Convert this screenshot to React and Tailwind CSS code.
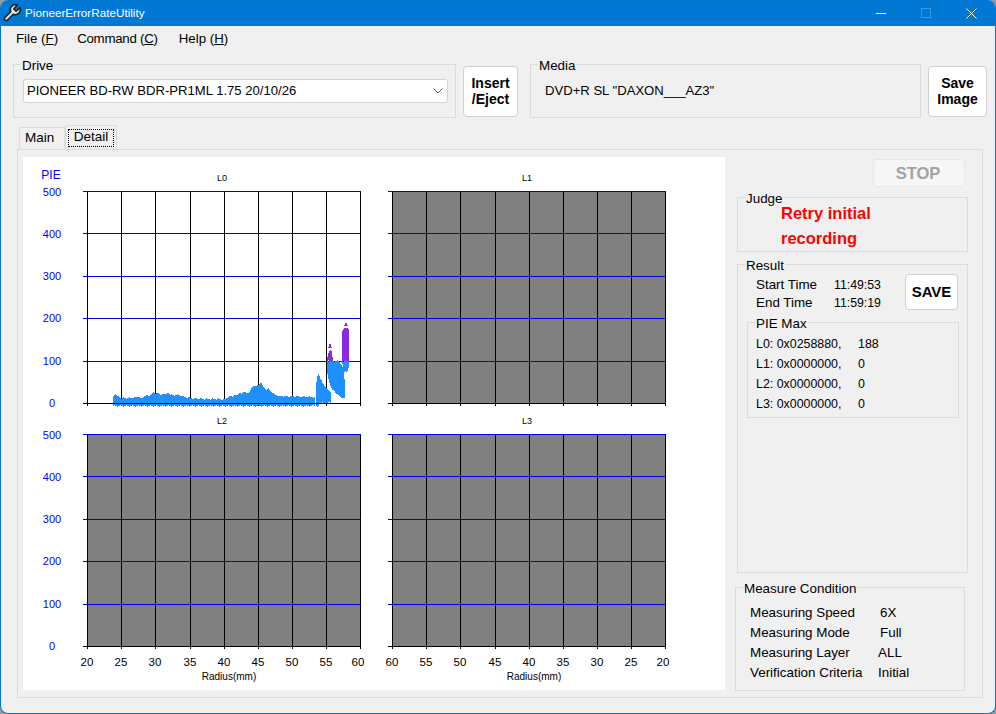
const font = "'Liberation Sans', Arial, sans-serif"

const xs = [0, 34, 68, 103, 137, 171, 205, 239, 273]
const ys = [0, 42, 85, 127, 170, 212]
const yLabels = ["500", "400", "300", "200", "100", "0"]
const yLabelPos = [31, 73, 115, 157, 200, 242]

// outlines of the plotted data, page coordinates
const baseRun = [[113,406],[113,396],[115,394],[117,396],[120,398],[125,398],[131,398],[138,397],[141,398],[144,396],[147,395],[149,397],[151,394],[153,392],[155,394],[157,393],[160,395],[163,394],[166,394],[168,392],[170,395],[173,395],[179,395],[185,397],[191,398],[199,399],[224,399],[228,398],[231,396],[233,397],[236,395],[239,393],[242,394],[245,392],[248,393],[250,391],[252,387],[258,385],[260,384],[261,382],[263,386],[266,390],[268,388],[270,391],[272,393],[276,395],[280,396],[315,397],[315,406]]
const spike = [[316,406],[316,384],[318,374],[320,377],[323,384],[326,388],[329,391],[331,392],[331,403],[319,403],[319,406]]
const blob = [[327,361],[339,361],[341,364],[343,368],[344,372],[345,385],[345,398],[343,398],[340,396],[335,392],[331,387],[329,381],[327,372]]
const tail = [[342,361],[349,361],[349,367],[347,372],[344,372]]
const purpleA = [[327,361],[328,354],[330,350],[332,352],[333,361]]
const purpleB = [[342,361],[342,332],[344,328],[348,328],[349,332],[349,361]]

// break the straight edges up, the plot is a scatter of single readings
function rough(points) {
	const out = []
	let n = 0
	points.forEach(([x, y], i) => {
		const next = points[(i + 1) % points.length]
		const steps = Math.max(1, Math.round(Math.hypot(next[0] - x, next[1] - y) / 2))
		for (let s = 0; s < steps; s++) {
			n++
			const jit = s == 0 ? 0 : ((n * 7) % 3) - 1
			out.push((x + (next[0] - x) * s / steps) + "," + (y + (next[1] - y) * s / steps + jit * 0.8))
		}
	})
	return out.join(" ")
}

function Chart({ title, dark, labels, xAxis, pie, data }) {
	return (
		<svg width="305" height={xAxis ? 282 : 243} className="block overflow-visible" style={{ fontFamily: font }}>
			<text x="199" y="16" fontSize="9" textAnchor="middle" fill="#000">{title}</text>
			{pie && <text x="28" y="14" fontSize="12" textAnchor="middle" fill="#0000ff">PIE</text>}
			{labels && yLabels.map((l, i) => (
				<text key={l} x="29" y={yLabelPos[i]} fontSize="11" textAnchor="middle" fill="#0000ff">{l}</text>
			))}
			<g transform="translate(64,26)" shapeRendering="crispEdges">
				<rect x="0" y="0" width="273" height="212" fill={dark ? "#808080" : "#ffffff"} />
				{xs.map((x) => (
					<line key={x} x1={x + 0.5} x2={x + 0.5} y1="0" y2="215" stroke="#000" />
				))}
				{ys.map((y, i) => (
					<line key={y} x1="-4" x2="274" y1={y + 0.5} y2={y + 0.5} stroke={i == 5 ? "#000" : "#0000e0"} />
				))}
			</g>
			{data && (
				<g transform="translate(-23,-165)" shapeRendering="crispEdges">
					<polygon points={rough(baseRun)} fill="#1e90ff" />
					<polygon points={rough(spike)} fill="#1e90ff" />
					<polygon points={rough(blob)} fill="#1e90ff" />
					<polygon points={rough(tail)} fill="#1e90ff" />
					<polygon points={rough(purpleA)} fill="#8a2be2" />
					<polygon points="328,348 330,343 332,348" fill="#8a2be2" />
					<polygon points={rough(purpleB)} fill="#8a2be2" />
					<polygon points="344,326 346,322 348,326" fill="#8a2be2" />
					<line x1="83" x2="361" y1="403.5" y2="403.5" stroke="#000" />
				</g>
			)}
			{xAxis && xAxis.map((l, i) => (
				<text key={l + i} x={64 + xs[i] - (i == 8 ? 2 : 0)} y="258" fontSize="11.5" textAnchor="middle" fill="#000">{l}</text>
			))}
			{xAxis && <text x="206" y="272" fontSize="10" textAnchor="middle" fill="#000">Radius(mm)</text>}
		</svg>
	)
}

function Group({ label, className, children }) {
	return (
		<div className={"relative border border-[#dcdcdc] " + className}>
			<span className="absolute -top-[7px] left-[7px] bg-[#f0f0f0] px-px text-[13.4px] leading-[16px]">{label}</span>
			{children}
		</div>
	)
}

function Btn({ children, className }) {
	return (
		<button className={"bg-white border border-[#d0d0d0] rounded-[4px] font-bold text-black leading-[16px] " + className}>{children}</button>
	)
}

function Row({ a, b, w, className }) {
	return (
		<div className={"flex " + className}>
			<span style={{ width: w }} className="shrink-0">{a}</span>
			<span>{b}</span>
		</div>
	)
}

export default function App() {
	const up = ["20", "25", "30", "35", "40", "45", "50", "55", "60"]
	const down = ["60", "55", "50", "45", "40", "35", "30", "25", "20"]
	return (
		<div className="w-[996px] h-[714px] bg-[#9a9a9a] overflow-hidden text-[13px] text-black" style={{ fontFamily: font }}>
			<div className="w-full h-full flex flex-col bg-[#f0f0f0] border border-t-0 border-[#0078d4] rounded-t-[8px] rounded-b-[8px] overflow-hidden">
				<div className="h-[26px] shrink-0 bg-[#0078d4] flex items-center text-white text-[11.7px]">
					<svg width="20" height="20" viewBox="0 0 24 24" className="ml-[1px] mr-[3px]" fill="#e4e4e4" stroke="#222" strokeWidth="2" strokeLinejoin="round">
						<path d="M14.7 6.3a1 1 0 0 0 0 1.4l1.6 1.6a1 1 0 0 0 1.4 0l3.77-3.77a6 6 0 0 1-7.94 7.94l-6.91 6.91a2.12 2.12 0 0 1-3-3l6.91-6.91a6 6 0 0 1 7.94-7.94l-3.76 3.76z" />
					</svg>
					<span>PioneerErrorRateUtility</span>
					<div className="ml-auto flex items-center">
						<div className="w-[10px] h-px bg-white mr-[35px]"></div>
						<div className="w-[10px] h-[10px] border border-[#3a97e0] mr-[35px]"></div>
						<svg width="11" height="11" viewBox="0 0 11 11" className="mr-[18px]" stroke="#fff" strokeWidth="1"><path d="M0.5 0.5l10 10M10.5 0.5l-10 10" /></svg>
					</div>
				</div>

				<div className="h-[24px] mt-[1px] shrink-0 flex items-center pl-[15px] text-[13.3px]">
					<span className="mr-[19px]">File (<u>F</u>)</span>
					<span className="mr-[21px] tracking-[-0.02em]">Command (<u>C</u>)</span>
					<span>Help (<u>H</u>)</span>
				</div>

				<div className="flex items-start mt-[13px] pl-[12px] h-[53px] shrink-0">
					<Group label="Drive" className="w-[443px] h-[54px] pl-[9px] pt-[14px]">
						<div className="w-[425px] h-[24px] bg-white border border-[#d4d4d4] rounded-[3px] flex items-center pl-[3px] pr-[4px] text-[13.1px]">
							<span>PIONEER BD-RW BDR-PR1ML 1.75 20/10/26</span>
							<svg width="10" height="6" viewBox="0 0 10 6" className="ml-auto" fill="none" stroke="#555"><path d="M0.5 0.5l4.5 4.5 4.5-4.5" /></svg>
						</div>
					</Group>
					<Btn className="w-[55px] h-[51px] ml-[7px] mt-[2px] pb-[2px] text-[14px]">Insert<br />/Eject</Btn>
					<Group label="Media" className="w-[391px] h-[54px] ml-[12px] pl-[14px] pt-[16px] text-[13.1px]">
						DVD+R SL "DAXON___AZ3"
					</Group>
					<Btn className="w-[59px] h-[51px] ml-[7px] mt-[2px] pb-[2px] text-[14px]">Save<br />Image</Btn>
				</div>

				<div className="flex items-end h-[24px] mt-[8px] ml-[18px] shrink-0 text-[13.5px]">
					<div className="w-[46px] h-[22px] border border-b-0 border-[#dcdcdc] flex items-center pl-[5px]">Main</div>
					<div className="w-[52px] h-[24px] border border-b-0 border-[#dcdcdc] flex items-start justify-center pt-[3px]">
						<span className="w-[46px] h-[18px] border border-dotted border-black text-center leading-[14px]">Detail</span>
					</div>
				</div>

				<div className="w-[966px] h-[549px] ml-[16px] shrink-0 border border-[#dcdcdc] pl-[5px] pt-[7px] flex">
					<div className="w-[702px] h-[533px] bg-white pt-[8px] grid grid-cols-[305px_305px] grid-rows-[243px_282px]">
						<Chart title="L0" labels pie data />
						<Chart title="L1" dark />
						<Chart title="L2" dark labels xAxis={up} />
						<Chart title="L3" dark xAxis={down} />
					</div>

					<div className="w-[250px] pl-[10px] pt-[2px] flex flex-col">
						<div className="h-[28px] w-[92px] ml-[138px] bg-[#f6f6f6] border border-[#e6e6e6] rounded-[4px] flex items-center justify-center pr-[2px] font-bold text-[16.5px] text-[#a3a3a3]">STOP</div>

						<Group label="Judge" className="w-[231px] h-[55px] ml-[2px] mt-[10px] shrink-0">
							<div className="pl-[43px] pt-[3px] font-bold text-[16.5px] leading-[25px] text-[#ff0000]">Retry initial<br />recording</div>
						</Group>

						<Group label="Result" className="w-[231px] h-[309px] ml-[2px] mt-[12px] shrink-0">
							<div className="flex">
								<div className="pl-[18px] pt-[11px] leading-[17px] w-[167px] text-[13.4px]">
									<Row a="Start Time" b={<span className="text-[12.3px]">11:49:53</span>} w="78px" />
									<Row a="End Time" b={<span className="text-[12.3px]">11:59:19</span>} w="78px" />
								</div>
								<Btn className="w-[53px] h-[36px] mt-[9px] text-[15px]">SAVE</Btn>
							</div>
							<Group label="PIE Max" className="w-[212px] h-[96px] ml-[9px] mt-[10px] pt-[11px] pl-[8px] leading-[20px] text-[12.4px]">
								<Row a="L0: 0x0258880," b="188" w="102px" />
								<Row a="L1: 0x0000000," b="0" w="102px" />
								<Row a="L2: 0x0000000," b="0" w="102px" />
								<Row a="L3: 0x0000000," b="0" w="102px" />
							</Group>
						</Group>

						<Group label="Measure Condition" className="w-[230px] h-[104px] mt-[14px] shrink-0 pl-[14px] pt-[15px] leading-[20px] text-[13.4px]">
							<Row a="Measuring Speed" b="6X" w="130px" />
							<Row a="Measuring Mode" b="Full" w="130px" />
							<Row a="Measuring Layer" b="ALL" w="128px" />
							<Row a="Verification Criteria" b="Initial" w="128px" />
						</Group>
					</div>
				</div>
			</div>
		</div>
	)
}
